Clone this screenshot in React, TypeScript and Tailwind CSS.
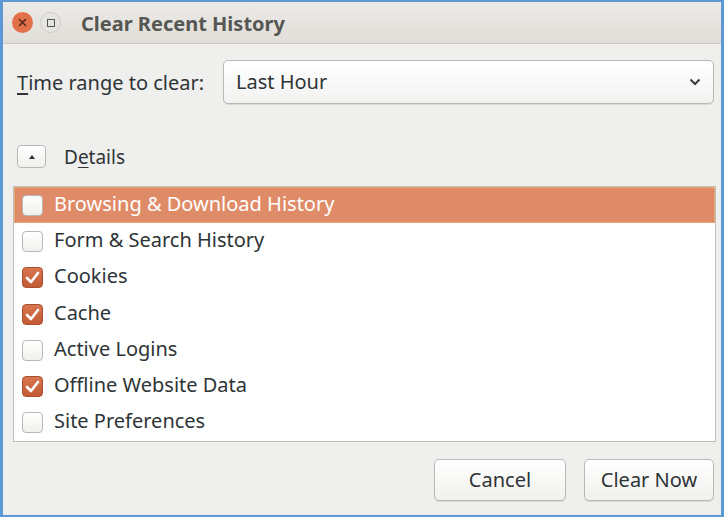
import React from 'react';

const ITEMS = [
  { label: 'Browsing & Download History', checked: false, selected: true },
  { label: 'Form & Search History', checked: false },
  { label: 'Cookies', checked: true },
  { label: 'Cache', checked: true },
  { label: 'Active Logins', checked: false },
  { label: 'Offline Website Data', checked: true },
  { label: 'Site Preferences', checked: false },
];

const FONT = { fontFamily: '"Noto Sans", "Open Sans", sans-serif' };

function CheckBox({ checked }: { checked: boolean }) {
  if (checked) {
    return (
      <div className="w-[21px] h-[21px] rounded-[4px] border border-[#a8502f] bg-gradient-to-b from-[#d9754f] to-[#c15a35] flex items-center justify-center shrink-0">
        <svg width="15" height="13" viewBox="0 0 15 13">
          <path d="M2 7 L6 11 L13 2" fill="none" stroke="#fff" strokeWidth="2.6" strokeLinecap="round" strokeLinejoin="round" />
        </svg>
      </div>
    );
  }
  return <div className="w-[21px] h-[21px] rounded-[4px] border border-[#b8b8b4] bg-gradient-to-b from-white to-[#f0f0ee] shrink-0" />;
}

export default function App() {
  return (
    <div className="w-[728px] h-[518px] bg-white" style={FONT}>
      <div className="w-[724px] h-[517px] border-t-2 border-b-2 border-l-[3px] border-r-[3px] border-[#5d98d6] bg-[#efefee] flex flex-col">
        {/* title bar */}
        <div className="h-[42px] shrink-0 flex items-center bg-gradient-to-b from-[#eceae7] to-[#e1ded9] border-b border-[#cdcac5]">
          <div className="ml-[9px] w-[21px] h-[21px] rounded-full bg-[#e2714b] flex items-center justify-center">
            <svg width="9" height="9" viewBox="0 0 9 9">
              <path d="M1.5 1.5 L7.5 7.5 M7.5 1.5 L1.5 7.5" stroke="#5a2a1a" strokeWidth="1.6" strokeLinecap="round" />
            </svg>
          </div>
          <div className="ml-[7px] w-[21px] h-[21px] rounded-full bg-[#e6e4e0] border border-[#cfccc7] flex items-center justify-center">
            <div className="w-[8px] h-[8px] border border-[#555753]" />
          </div>
          <span className="ml-[20px] mt-[2px] text-[20px] font-bold text-[#555753]">Clear Recent History</span>
        </div>

        {/* time range */}
        <div className="mt-[16px] h-[44px] shrink-0 flex items-center pl-[14px]">
          <span className="text-[20px] text-[#2e3436] w-[206px] mt-[1px]">
            <span className="underline underline-offset-[3px]">T</span>ime range to clear:
          </span>
          <div className="w-[491px] h-[44px] rounded-[5px] border border-[#b9b8b4] bg-gradient-to-b from-white to-[#f2f2f1] flex items-center px-[12px] shadow-[0_1px_0_#d9d8d5]">
            <span className="text-[20px] text-[#2e3436] flex-1">Last Hour</span>
            <svg width="12" height="8" viewBox="0 0 12 8">
              <path d="M1.5 1.5 L6 6 L10.5 1.5" fill="none" stroke="#3a3c3b" strokeWidth="2" />
            </svg>
          </div>
        </div>

        {/* details */}
        <div className="mt-[41px] h-[23px] shrink-0 flex items-center pl-[14px]">
          <div className="w-[29px] h-[23px] rounded-[4px] border border-[#b9b8b4] bg-gradient-to-b from-white to-[#f0f0ee] flex items-center justify-center">
            <svg width="6" height="4" viewBox="0 0 6 4">
              <path d="M0 4 L3 0 L6 4 Z" fill="#2e3436" />
            </svg>
          </div>
          <span className="ml-[18px] pt-[2px] text-[19px] leading-none text-[#2e3436]">
            D<span className="underline underline-offset-[3px]">e</span>tails
          </span>
        </div>

        {/* list */}
        <div className="mt-[18px] ml-[10px] w-[703px] h-[256px] shrink-0 border border-[#bfbebb] bg-white flex flex-col">
          {ITEMS.map((item) => (
            <div
              key={item.label}
              className={
                item.selected
                  ? 'h-[36.3px] shrink-0 flex items-center pl-[7px] bg-[#e08b67] border border-dotted border-[#f2c27a]'
                  : 'h-[36.3px] shrink-0 flex items-center pl-[8px]'
              }
            >
              <CheckBox checked={item.checked} />
              <span className={item.selected ? 'ml-[11px] pb-[3px] text-[20px] text-white' : 'ml-[11px] pb-[3px] text-[20px] text-[#2e3436]'}>
                {item.label}
              </span>
            </div>
          ))}
        </div>

        {/* buttons */}
        <div className="mt-[17px] flex justify-end gap-[18px] pr-[7px]">
          <button className="w-[132px] h-[42px] rounded-[5px] border border-[#b9b8b4] bg-gradient-to-b from-white to-[#f0f0ee] text-[20px] text-[#2e3436] shadow-[0_1px_0_#d9d8d5]">
            Cancel
          </button>
          <button className="w-[130px] h-[42px] rounded-[5px] border border-[#b9b8b4] bg-gradient-to-b from-white to-[#f0f0ee] text-[20px] text-[#2e3436] shadow-[0_1px_0_#d9d8d5]">
            Clear Now
          </button>
        </div>
      </div>
    </div>
  );
}
